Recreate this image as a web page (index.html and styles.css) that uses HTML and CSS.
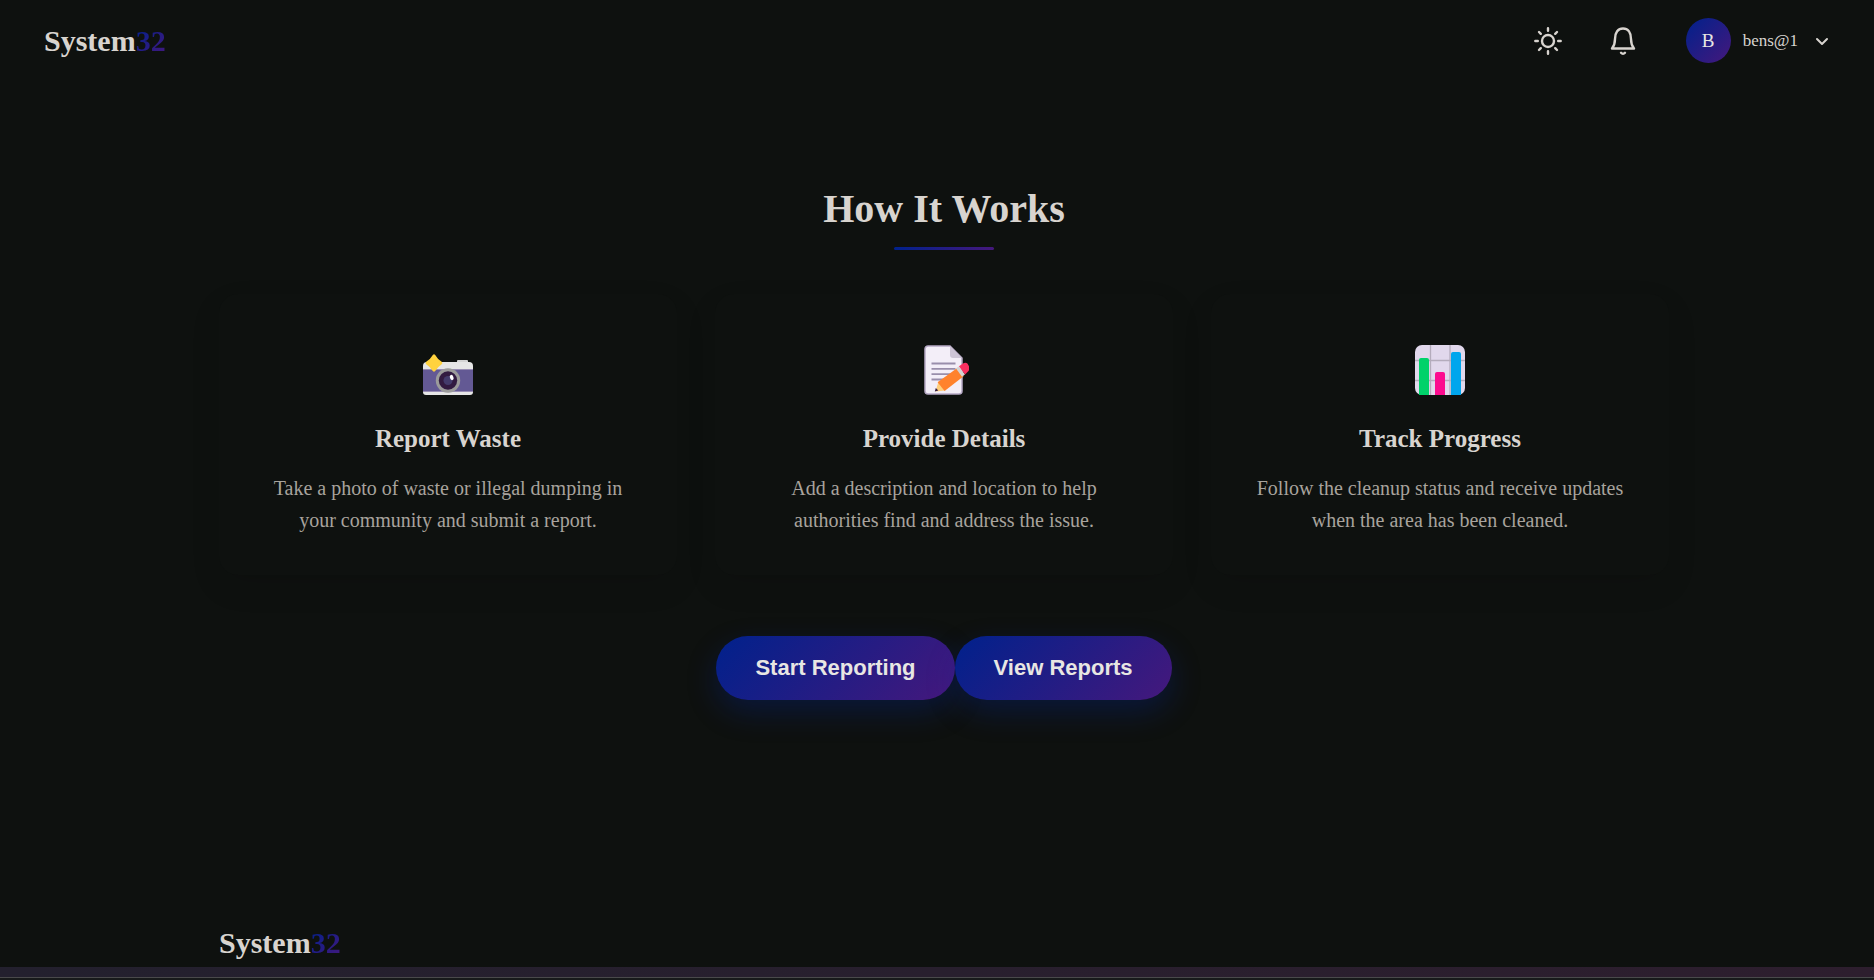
FILE: index.html
```html
<!DOCTYPE html>
<html lang="en">
<head>
<meta charset="utf-8">
<meta name="viewport" content="width=device-width, initial-scale=1">
<title>System32</title>
<link rel="stylesheet" href="styles.css">
</head>
<body>
<header class="topbar">
  <a class="logo" href="#">System<span class="logo-accent">32</span></a>
  <div class="tools">
    <button class="icon-button" type="button" aria-label="Toggle theme">
      <svg class="tool-icon" viewBox="0 0 30 30" aria-hidden="true"><circle cx="15" cy="15" r="6"/><path d="M15 2.300v2.500M15 25.200v2.500M2.300 15h2.500M25.200 15h2.500M6 6l1.800 1.800M22.200 22.200L24 24M6 24l1.800-1.800M22.200 7.800L24 6"/></svg>
    </button>
    <button class="icon-button" type="button" aria-label="Notifications">
      <svg class="tool-icon" viewBox="0 0 30 30" aria-hidden="true"><path d="M4 22.500c2.100-2.600 3-5.500 3-9.500 0-6.500 3-10.500 8-10.500s8 4 8 10.500c0 4 .9 6.900 3 9.500zM13 26.800c1.200 1.300 2.800 1.300 4 0"/></svg>
    </button>
    <button class="profile" type="button">
      <span class="avatar">B</span>
      <span class="profile-name">bens@1</span>
      <svg class="chevron" viewBox="0 0 20 20" aria-hidden="true"><path d="M5 8l5 5 5-5"/></svg>
    </button>
  </div>
</header>
<main class="works">
  <h1 class="title">How It Works</h1>
  <div class="cards">
    <section class="card">
      <svg class="picture" viewBox="0 -5 50 50" aria-hidden="true">
        <rect x="34" y="10" width="11" height="6" rx="1" fill="#d4d4d4"/>
        <path d="M4 12h42a4 4 0 0 1 4 4v4H0v-4a4 4 0 0 1 4-4z" fill="#e6e6e6"/>
        <path d="M0 41h50v1a3 3 0 0 1-3 3H3a3 3 0 0 1-3-3z" fill="#e6e6e6"/>
        <rect y="19" width="50" height="22" fill="#635994"/>
        <path d="M0 19.500h50M0 41.500h50" stroke="#998eb5" stroke-width="1"/>
        <circle cx="25" cy="30.500" r="12.200" fill="#9b9b9b"/>
        <circle cx="25" cy="30.500" r="9.200" fill="#321b41"/>
        <circle cx="25" cy="30.500" r="4.500" fill="#433b6b"/>
        <ellipse cx="28.700" cy="27.500" rx="1.800" ry="2.700" fill="#fff" transform="rotate(-20 28.700 27.500)"/>
        <path d="M9.800 4.900q1.200-1.500 2.400 0Q14.500 9 18.700 11.800q1.500 1.200 0 2.400Q14.500 17 12.200 21q-1.200 1.500-2.400 0Q7.500 17 3.200 14.200q-1.500-1.200 0-2.400Q7.500 9 9.800 4.900z" fill="#ffd23e"/>
      </svg>
      <h2 class="card-title">Report Waste</h2>
      <p class="card-text">Take a photo of waste or illegal dumping in your community and submit a report.</p>
    </section>
    <section class="card">
      <svg class="picture" viewBox="0 0 50 50" aria-hidden="true">
        <path d="M9 1h22l12 12v33a3 3 0 0 1-3 3H9a3 3 0 0 1-3-3V4a3 3 0 0 1 3-3z" fill="#f3eef8" stroke="#b6a9c5" stroke-width="1.500"/>
        <path d="M31 1l12 12H34a3 3 0 0 1-3-3z" fill="#cdc4d6"/>
        <path d="M12.500 18.500h24M12.500 23.800h24M12.500 29.200h20M12.500 34.500h14" stroke="#998eab" stroke-width="1.800"/>
        <path d="M16.500 46.500l3-10 7 9z" fill="#ffce7c"/>
        <path d="M15.800 46.500l1-3.500 2.500 2.600z" fill="#321b41"/>
        <path d="M18.600 37.200l20-14.500 6 8.500-19 14.800z" fill="#ff822d"/>
        <path d="M37 23.500l3-2.200 6 8.200-3 2.300z" fill="#d4d4d4"/>
        <path d="M40 21.300l4-2.800q2.500-1.500 4.400 0l1.800 3q1.400 2-.7 4.500L46 29.500z" fill="#f92f60"/>
      </svg>
      <h2 class="card-title">Provide Details</h2>
      <p class="card-text">Add a description and location to help authorities find and address the issue.</p>
    </section>
    <section class="card">
      <svg class="picture" viewBox="0 0 50 50" aria-hidden="true">
        <rect width="50" height="50" rx="7" fill="#e1d8ec"/>
        <path d="M15.500 0v50M35 0v50M0 15.500h50M0 35.500h50" stroke="#b4acbc" stroke-width="1.300"/>
        <path d="M4 50V15q0-2 2-2h6q2 0 2 2v35z" fill="#00d26a"/>
        <path d="M20 50V29q0-2 2-2h6q2 0 2 2v21z" fill="#fc0b8f"/>
        <path d="M36 50V9q0-2 2-2h6q2 0 2 2v41z" fill="#00a6ed"/>
      </svg>
      <h2 class="card-title">Track Progress</h2>
      <p class="card-text">Follow the cleanup status and receive updates when the area has been cleaned.</p>
    </section>
  </div>
  <div class="actions">
    <button class="action" type="button">Start Reporting</button>
    <button class="action" type="button">View Reports</button>
  </div>
</main>
<footer class="footer">
  <a class="logo" href="#">System<span class="logo-accent">32</span></a>
</footer>
<div class="bottom-strip"></div>
</body>
</html>
```
FILE: styles.css
```css
* { box-sizing: border-box; }

body {
  margin: 0;
  min-height: 100vh;
  display: flex;
  flex-direction: column;
  background: #0e110f;
  color: #d8d4cf;
  font-family: "Liberation Serif", "Times New Roman", serif;
}

button {
  border: 0;
  padding: 0;
  background: none;
  color: inherit;
  cursor: pointer;
}

.topbar {
  display: flex;
  align-items: center;
  justify-content: space-between;
  height: 81px;
  padding: 0 42px 0 44px;
}

.logo {
  color: inherit;
  font-size: 30px;
  font-weight: 700;
  line-height: 36px;
  text-decoration: none;
}

.logo-accent {
  background: linear-gradient(135deg, #00218c, #45187c);
  background-clip: text;
  -webkit-background-clip: text;
  color: transparent;
}

.tools { display: flex; align-items: center; }

.icon-button {
  display: flex;
  align-items: center;
  justify-content: center;
  width: 46px;
  height: 46px;
  margin-right: 29px;
}

.tool-icon, .chevron {
  fill: none;
  stroke: #d8d4cf;
  stroke-width: 2;
  stroke-linecap: round;
  stroke-linejoin: round;
}

.tool-icon { width: 30px; height: 30px; stroke-width: 2.4; }
.chevron { width: 20px; height: 20px; margin-left: 2px; }

.profile {
  display: flex;
  align-items: center;
  gap: 12px;
  margin-left: 11px;
  font: 17px/24px "Liberation Serif", "Times New Roman", serif;
}

.avatar {
  display: flex;
  align-items: center;
  justify-content: center;
  width: 45px;
  height: 45px;
  border-radius: 50%;
  background: linear-gradient(135deg, #00218c, #45187c);
  color: #e8e6e3;
  font-size: 19px;
}

.works {
  display: flex;
  flex-direction: column;
  align-items: center;
  padding: 104px 205px 0 219px;
}

.title {
  display: flex;
  flex-direction: column;
  align-items: center;
  gap: 14px;
  margin: 0 0 44px;
  font-size: 40px;
  line-height: 48px;
}

.title::after {
  content: "";
  width: 100px;
  height: 3px;
  border-radius: 2px;
  background: linear-gradient(90deg, #00218c, #45187c);
}

.cards {
  display: grid;
  grid-template-columns: repeat(3, 1fr);
  gap: 38px;
  width: 100%;
}

.card {
  display: flex;
  flex-direction: column;
  align-items: center;
  padding: 51px 38px 39px;
  border-radius: 19px;
  background: #0e110f;
  box-shadow: 0 12px 30px rgba(0, 0, 0, 0.1);
  text-align: center;
}

.picture { width: 50px; height: 50px; }

.card-title {
  margin: 29px 0 18px;
  font-size: 25px;
  line-height: 30px;
}

.card-text {
  margin: 0;
  color: #a8a39d;
  font-size: 20px;
  line-height: 32px;
}

.actions { display: flex; margin-top: 61px; }

.action {
  height: 64px;
  padding: 0 39px;
  border-radius: 32px;
  background: linear-gradient(135deg, #00218c, #45187c);
  box-shadow: 0 12px 30px rgba(0, 40, 160, 0.3);
  color: #e8e6e3;
  font: 700 22px/28px "Liberation Sans", Arial, sans-serif;
}

.footer {
  margin-top: auto;
  padding: 0 205px 6px 219px;
}

.bottom-strip {
  height: 13px;
  border-bottom: 2px solid #181a1b;
  background: linear-gradient(#49494b, #49494b) bottom / 100% 1px no-repeat, linear-gradient(90deg, #23202e, #2d1e2e);
}
```
